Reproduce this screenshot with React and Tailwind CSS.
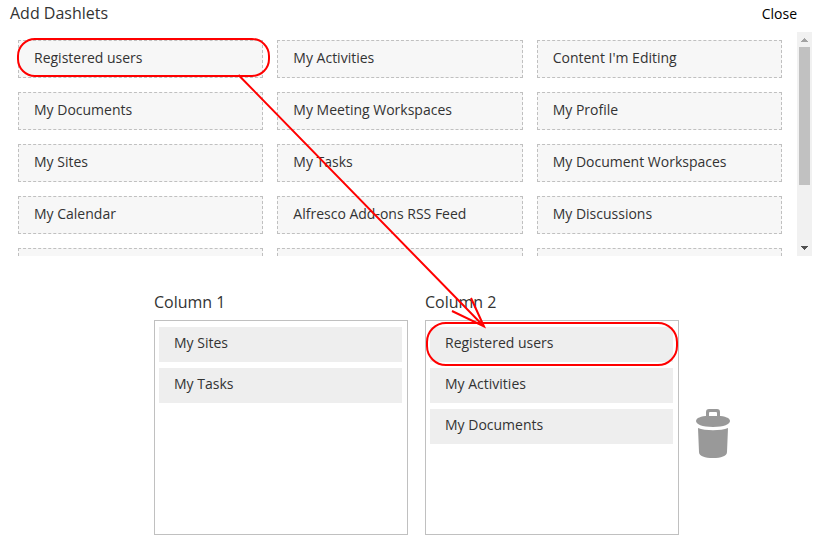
const dashlets = [
  "Registered users",
  "My Activities",
  "Content I'm Editing",
  "My Documents",
  "My Meeting Workspaces",
  "My Profile",
  "My Sites",
  "My Tasks",
  "My Document Workspaces",
  "My Calendar",
  "Alfresco Add-ons RSS Feed",
  "My Discussions",
];

const columns = [
  { title: "Column 1", items: ["My Sites", "My Tasks"] },
  { title: "Column 2", items: ["Registered users", "My Activities", "My Documents"] },
];

function Header() {
  return (
    <header className="flex h-8 items-start justify-between pl-[10px] pr-[39px]">
      <h1 className="pt-[2px] text-base leading-[22px]">Add Dashlets</h1>
      <button type="button" className="pt-1 text-sm leading-5 text-black">
        Close
      </button>
    </header>
  );
}

function ScrollBar() {
  return (
    <div className="flex w-[15px] shrink-0 flex-col items-center bg-[#f1f1f1]" aria-hidden="true">
      <svg className="h-[15px] w-[15px] shrink-0" viewBox="0 0 15 15" shapeRendering="crispEdges">
        <path d="M7 6h1v1h1v1h1v1h1v1H4V9h1V8h1V7h1z" fill="#a3a3a3" />
      </svg>
      <div className="h-[138px] w-[11px] bg-[#c1c1c1]" />
      <svg className="mt-auto h-[15px] w-[15px] shrink-0" viewBox="0 0 15 15" shapeRendering="crispEdges">
        <path d="M4 5h7v1h-1v1H9v1H8v1H7V8H6V7H5V6H4z" fill="#505050" />
      </svg>
    </div>
  );
}

function DashletPicker() {
  return (
    <section className="mr-6 flex h-56 overflow-hidden">
      <ul className="grid flex-1 auto-rows-[38px] grid-cols-3 gap-[14px] pl-[18px] pr-[15px] pt-2">
        {dashlets.map((name) => (
          <li
            key={name}
            className="border border-dashed border-[#c0c0c0] bg-[#f7f7f7] px-[15px] pt-[7px] text-sm leading-5"
          >
            {name}
          </li>
        ))}
        {[1, 2, 3].map((n) => (
          <li key={n} className="border border-dashed border-[#c0c0c0] bg-[#f7f7f7]" />
        ))}
      </ul>
      <ScrollBar />
    </section>
  );
}

function Column({ title, items }) {
  return (
    <section className="w-[254px]">
      <h2 className="h-[29px] text-base leading-[22px]">{title}</h2>
      <ul className="flex min-h-[215px] flex-col gap-[6px] border border-[#c0c0c0] pb-[5px] pl-1 pr-[5px] pt-[6px]">
        {items.map((name) => (
          <li key={name} className="h-[35px] bg-[#eeeeee] px-[15px] pt-[6px] text-sm leading-5">
            {name}
          </li>
        ))}
      </ul>
    </section>
  );
}

function TrashIcon() {
  return (
    <svg className="h-[52px] w-9" viewBox="0 0 36 52" fill="#999999" aria-hidden="true">
      <path
        fillRule="evenodd"
        d="M11 10V4Q11 1 14 1H22Q25 1 25 4V10H22V5Q22 4 21 4H15Q14 4 14 5V10Z"
      />
      <path d="M1 13C1 10 6 8 13 8H23C30 8 35 10 35 13C35 16 29 19 18 19S1 16 1 13Z" />
      <path d="M3 20C10 23 26 23 33 20L32 44C32 48 26 50 18 50S4 48 4 44Z" />
    </svg>
  );
}

function Annotations() {
  return (
    <svg
      className="pointer-events-none absolute left-0 top-0 h-[541px] w-[836px]"
      viewBox="0 0 836 541"
      fill="none"
      stroke="#ff0000"
      strokeWidth="2"
      aria-hidden="true"
    >
      <rect x="18" y="39" width="251" height="37" rx="17" />
      <rect x="427" y="323" width="250" height="42" rx="19" />
      <path d="M238.500 75L484 326.500M452 311L484 326.500L471 298" />
    </svg>
  );
}

export default function App() {
  return (
    <main className="relative bg-white font-['Open_Sans',sans-serif] text-[#333333]">
      <Header />
      <DashletPicker />
      <div className="flex gap-[17px] pb-[6px] pl-[154px] pt-[35px]">
        {columns.map((column) => (
          <Column key={column.title} {...column} />
        ))}
        <button type="button" aria-label="Remove dashlet" className="-ml-px mt-[117px] self-start">
          <TrashIcon />
        </button>
      </div>
      <Annotations />
    </main>
  );
}
